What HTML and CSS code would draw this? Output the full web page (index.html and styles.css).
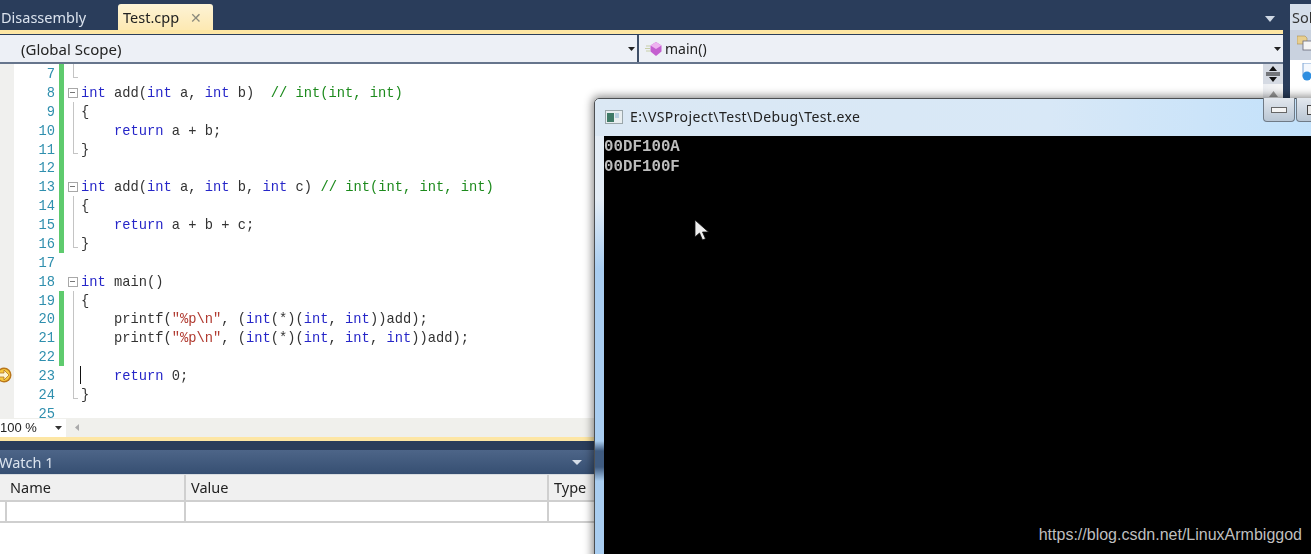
FILE: index.html
```html
<!DOCTYPE html>
<html lang="en">
<head>
<meta charset="UTF-8" />
<title>Test.cpp - Visual Studio</title>
<link rel="stylesheet" href="styles.css">
</head>

<body>
  <div class="screen">
    <div class="ide">
      <div class="main-col">
        <div class="tabbar">
          <span class="tab">Disassembly</span>
          <span class="tab active">Test.cpp <span class="tab-close">✕</span></span>
          <svg class="tab-menu" width="10" height="6" viewBox="0 0 10 6"><path d="M0 0h10L5 6z" fill="#cfd8e4"/></svg>
        </div>
        <div class="doc-line"></div>

        <div class="scopebar">
          <div class="combo scope-left">
            <span>(Global Scope)</span>
            <svg class="combo-arrow" width="7" height="4" viewBox="0 0 7 4"><path d="M0 0h7L3.500 4z" fill="#222"/></svg>
          </div>
          <div class="combo scope-right">
            <svg class="method-icon" width="18" height="16" viewBox="0 0 18 16">
              <path d="M1 5h4M0 7.500h5M1 10h4" stroke="#c8cfa8" stroke-width="1"/>
              <path d="M11 1l5.500 3.500v6L11 15l-5.500-4.500v-6z" fill="#c45fd0"/>
              <path d="M11 1l5.500 3.500L11 8 5.500 4.500z" fill="#eeb2f0"/>
            </svg>
            <span>main()</span>
            <svg class="combo-arrow" width="7" height="4" viewBox="0 0 7 4"><path d="M0 0h7L3.500 4z" fill="#222"/></svg>
          </div>
        </div>

        <div class="editor">
          <div class="code-area">
            <div class="row"><span class="bp"></span><span class="ln">7</span><span class="chg on"></span><span class="fold end"></span><span class="code"></span></div>
            <div class="row"><span class="bp"></span><span class="ln">8</span><span class="chg on"></span><span class="fold box"></span><span class="code"><i>int</i> add(<i>int</i> a, <i>int</i> b)  <b>// int(int, int)</b></span></div>
            <div class="row"><span class="bp"></span><span class="ln">9</span><span class="chg on"></span><span class="fold line"></span><span class="code">{</span></div>
            <div class="row"><span class="bp"></span><span class="ln">10</span><span class="chg on"></span><span class="fold line"></span><span class="code">    <i>return</i> a + b;</span></div>
            <div class="row"><span class="bp"></span><span class="ln">11</span><span class="chg on"></span><span class="fold end"></span><span class="code">}</span></div>
            <div class="row"><span class="bp"></span><span class="ln">12</span><span class="chg on"></span><span class="fold"></span><span class="code"></span></div>
            <div class="row"><span class="bp"></span><span class="ln">13</span><span class="chg on"></span><span class="fold box"></span><span class="code"><i>int</i> add(<i>int</i> a, <i>int</i> b, <i>int</i> c) <b>// int(int, int, int)</b></span></div>
            <div class="row"><span class="bp"></span><span class="ln">14</span><span class="chg on"></span><span class="fold line"></span><span class="code">{</span></div>
            <div class="row"><span class="bp"></span><span class="ln">15</span><span class="chg on"></span><span class="fold line"></span><span class="code">    <i>return</i> a + b + c;</span></div>
            <div class="row"><span class="bp"></span><span class="ln">16</span><span class="chg on"></span><span class="fold end"></span><span class="code">}</span></div>
            <div class="row"><span class="bp"></span><span class="ln">17</span><span class="chg"></span><span class="fold"></span><span class="code"></span></div>
            <div class="row"><span class="bp"></span><span class="ln">18</span><span class="chg"></span><span class="fold box"></span><span class="code"><i>int</i> main()</span></div>
            <div class="row"><span class="bp"></span><span class="ln">19</span><span class="chg on"></span><span class="fold line"></span><span class="code">{</span></div>
            <div class="row"><span class="bp"></span><span class="ln">20</span><span class="chg on"></span><span class="fold line"></span><span class="code">    printf(<u>"%p\n"</u>, (<i>int</i>(*)(<i>int</i>, <i>int</i>))add);</span></div>
            <div class="row"><span class="bp"></span><span class="ln">21</span><span class="chg on"></span><span class="fold line"></span><span class="code">    printf(<u>"%p\n"</u>, (<i>int</i>(*)(<i>int</i>, <i>int</i>, <i>int</i>))add);</span></div>
            <div class="row"><span class="bp"></span><span class="ln">22</span><span class="chg on"></span><span class="fold line"></span><span class="code"></span></div>
            <div class="row"><span class="bp">
              <svg class="bp-arrow" width="16" height="16" viewBox="0 0 16 16">
                <circle cx="8" cy="8" r="7.500" fill="#b9761a"/>
                <circle cx="8" cy="8" r="6" fill="#f7c93f"/>
                <path d="M3 6h5V3l5 5-5 5v-3H3z" fill="#fff6d0" stroke="#a8651a" stroke-width=".7"/>
              </svg>
            </span><span class="ln">23</span><span class="chg"></span><span class="fold line"></span><span class="code"><s class="caret"></s>    <i>return</i> 0;</span></div>
            <div class="row"><span class="bp"></span><span class="ln">24</span><span class="chg"></span><span class="fold end"></span><span class="code">}</span></div>
            <div class="row"><span class="bp"></span><span class="ln">25</span><span class="chg"></span><span class="fold"></span><span class="code"></span></div>
          </div>
          <div class="vscroll">
            <div class="split-btn">
              <svg width="14" height="16" viewBox="0 0 14 16">
                <path d="M0 7h14M0 9h14" stroke="#111" stroke-width="1"/>
                <path d="M7 0l4 5H3zM7 16l-4-5h8z" fill="#111"/>
              </svg>
            </div>
            <svg class="scroll-up" width="9" height="6" viewBox="0 0 9 6"><path d="M4.500 0L9 6H0z" fill="#999"/></svg>
          </div>
        </div>

        <div class="zoombar">
          <div class="zoom-combo">100 %
            <svg width="7" height="4" viewBox="0 0 7 4"><path d="M0 0h7L3.500 4z" fill="#333"/></svg>
          </div>
          <svg class="hscroll-left" width="4" height="7" viewBox="0 0 4 7"><path d="M4 0v7L0 3.500z" fill="#aaa"/></svg>
        </div>
        <div class="doc-line thin"></div>

        <div class="tool-gap"></div>
        <div class="watch-title">
          <span>Watch 1</span>
          <svg width="10" height="5" viewBox="0 0 10 5"><path d="M0 0h10L5 5z" fill="#d5dde8"/></svg>
        </div>
        <div class="watch-table">
          <div class="cell head"></div>
          <div class="cell head">Name</div>
          <div class="cell head">Value</div>
          <div class="cell head">Type</div>
          <div class="cell"></div>
          <div class="cell"></div>
          <div class="cell"></div>
          <div class="cell"></div>
        </div>
      </div>

      <div class="side-col">
        <div class="side-tab">Solution Explorer</div>
        <div class="side-tools">
          <svg width="18" height="18" viewBox="0 0 18 18">
            <path d="M0 2h8l2 2v6H0z" fill="#e8cf8e" stroke="#a78d55" stroke-width=".6"/>
            <rect x="6" y="7" width="12" height="9" fill="#f4f4f4" stroke="#667" stroke-width=".8"/>
          </svg>
        </div>
        <div class="side-body">
          <svg width="16" height="18" viewBox="0 0 16 18">
            <rect x="1" y="0" width="14" height="13" fill="#f4f8fd" stroke="#7fa6d6"/>
            <circle cx="5" cy="13" r="4.500" fill="#2f8ee0"/>
          </svg>
        </div>
      </div>
    </div>

    <div class="console">
      <div class="console-title">
        <svg width="18" height="14" viewBox="0 0 18 14">
          <rect x=".5" y=".5" width="17" height="13" fill="#e8eef0" stroke="#9aa6aa"/>
          <rect x="2" y="3" width="7" height="9" fill="#3f7a66"/>
          <rect x="10" y="3" width="4" height="5" fill="#b8cfe0"/>
        </svg>
        <span>E:\VSProject\Test\Debug\Test.exe</span>
        <div class="win-btns">
          <span class="win-btn"><s class="min-glyph"></s></span>
          <span class="win-btn"><s class="max-glyph"></s></span>
        </div>
      </div>
      <div class="console-body">
        <pre>00DF100A
00DF100F</pre>
        <svg class="mouse" width="16" height="23" viewBox="0 0 16 23">
          <path d="M1 1v17l4.500-4 3 7 3-1.300-3-6.700H14.500z" fill="#eee" stroke="#111" stroke-width=".8"/>
        </svg>
      </div>
    </div>
  </div>

  <div class="watermark">https://blog.csdn.net/LinuxArmbiggod</div>
</body>
</html>
```

FILE: styles.css
```css
html, body {
  margin: 0;
  padding: 0;
  overflow: hidden;
  background: #000;
}
.screen {
  position: relative;
  width: 1311px;
  height: 554px;
  overflow: hidden;
  filter: blur(0.45px);
}
.ide {
  display: flex;
  height: 554px;
  background: #2a3d5b;
  font-family: "Noto Sans", sans-serif;
  font-size: 14.5px;
  color: #222;
}
.main-col {
  width: 1283px;
  display: flex;
  flex-direction: column;
}

/* Tabs */
.tabbar {
  height: 30px;
  display: flex;
  align-items: flex-end;
  position: relative;
  flex: none;
}
.tab {
  width: 118px;
  height: 26px;
  line-height: 26px;
  padding-left: 1px;
  box-sizing: border-box;
  color: #dbe3ee;
  white-space: nowrap;
}
.tab.active {
  width: 95px;
  padding-left: 5px;
  color: #222;
  background: linear-gradient(#fdf3d6, #fde9b2);
  border-radius: 3px 3px 0 0;
}
.tab-close {
  margin-left: 7px;
  font-size: 14px;
  color: #8b8a7c;
}
.tab-menu {
  position: absolute;
  right: 8px;
  top: 16px;
}
.doc-line {
  height: 4px;
  flex: none;
  background: #fde6a4;
  margin-bottom: 1px;
}
.doc-line.thin {
  margin-bottom: 0;
}

/* Scope */
.scopebar {
  height: 29px;
  box-sizing: border-box;
  flex: none;
  display: flex;
  gap: 2px;
  background: #3f4f68;
  border-bottom: 2px solid #66758c;
}
.combo {
  display: flex;
  align-items: center;
  position: relative;
  background: #edf0f6;
  box-sizing: border-box;
}
.scope-left {
  width: 637px;
  padding-left: 21px;
  font-size: 15px;
}
.scope-right {
  flex: 1;
  padding-left: 6px;
  font-size: 14px;
}
.method-icon {
  margin-right: 2px;
}
.combo-arrow {
  position: absolute;
  right: 2px;
  top: 12px;
}

/* Editor */
.editor {
  height: 354px;
  flex: none;
  display: flex;
  background: #fff;
  overflow: hidden;
}
.code-area {
  flex: 1;
  font-family: "Liberation Mono", monospace;
  font-size: 13.75px;
  color: #333;
}
.row {
  display: flex;
  height: 18.88px;
  line-height: 22.88px;
}
.bp {
  width: 14px;
  flex: none;
  background: #f0f0ee;
  position: relative;
}
.bp-arrow {
  position: absolute;
  left: -4px;
  top: 1px;
}
.ln {
  width: 41px;
  flex: none;
  text-align: right;
  color: #2f8fae;
}
.chg {
  width: 5px;
  flex: none;
  margin-left: 4px;
}
.chg.on {
  background: #5fcb6e;
}
.fold {
  width: 17px;
  flex: none;
  position: relative;
}
.fold.line::before,
.fold.end::before,
.fold.box::after {
  content: "";
  position: absolute;
}
.fold.line::before {
  left: 9px;
  top: 0;
  bottom: 0;
  border-left: 1px solid #c4c4c4;
}
.fold.end::before {
  left: 9px;
  top: 0;
  height: 13px;
  width: 4px;
  border-left: 1px solid #c4c4c4;
  border-bottom: 1px solid #c4c4c4;
}
.fold.box {
  background: linear-gradient(#777, #777) 6px 9px / 5px 1px no-repeat;
}
.fold.box::after {
  left: 4px;
  top: 5px;
  width: 8px;
  height: 8px;
  border: 1px solid #a8a8a8;
}
.code {
  white-space: pre;
  position: relative;
}
.code i {
  font-style: normal;
  color: #2626c8;
}
.code b {
  font-weight: normal;
  color: #1c8a1c;
}
.code u {
  text-decoration: none;
  color: #b0392f;
}
.caret {
  position: absolute;
  left: -1px;
  top: 0;
  height: 18px;
  border-left: 1px solid #111;
}
.vscroll {
  width: 20px;
  flex: none;
  background: linear-gradient(90deg, #eceef2, #f6f6f6);
  display: flex;
  flex-direction: column;
  align-items: center;
}
.split-btn {
  width: 20px;
  height: 20px;
  background: #d5dae3;
  display: flex;
  align-items: center;
  justify-content: center;
}
.scroll-up {
  margin-top: 7px;
}

/* Zoom */
.zoombar {
  height: 19px;
  flex: none;
  display: flex;
  align-items: center;
  background: #f0f0ec;
}
.zoom-combo {
  width: 66px;
  height: 18px;
  background: #fff;
  box-sizing: border-box;
  font-family: "Liberation Sans", sans-serif;
  font-size: 13px;
  line-height: 18px;
  display: flex;
  justify-content: space-between;
  align-items: center;
  padding-right: 4px;
}
.hscroll-left {
  margin-left: 9px;
}

/* Watch */
.tool-gap {
  height: 9px;
  flex: none;
}
.watch-title {
  height: 24px;
  flex: none;
  display: flex;
  justify-content: space-between;
  align-items: center;
  width: 600px;
  background: linear-gradient(#4d6588, #364f72);
  color: #dbe3ee;
  margin-left: -1px;
  box-sizing: border-box;
  padding-right: 17px;
}
.watch-table {
  flex: 1;
  min-height: 0;
  display: grid;
  grid-template-columns: 5px 181px 363px 1fr;
  grid-template-rows: 27px 21px 1fr;
  background: #fff;
  border-top: 1px solid #d8dce0;
}
.cell {
  border-right: 2px solid #cfcfcf;
  border-bottom: 2px solid #cfcfcf;
  box-sizing: border-box;
  padding-left: 5px;
}
.cell.head {
  background: #f0f0f0;
  line-height: 24px;
}

/* Side panel */
.side-col {
  width: 21px;
  margin-left: 7px;
  display: flex;
  flex-direction: column;
  overflow: hidden;
}
.side-tab {
  height: 26px;
  margin-top: 4px;
  background: #d5deea;
  white-space: nowrap;
  padding-left: 2px;
  line-height: 26px;
  color: #333;
}
.side-tools {
  height: 30px;
  background: #c9d2df;
  padding: 4px 0 0 7px;
  box-sizing: border-box;
}
.side-body {
  flex: 1;
  background: #fff;
  padding: 3px 0 0 12px;
}

/* Console window */
.console {
  position: absolute;
  left: 594px;
  top: 98px;
  width: 760px;
  height: 520px;
  display: flex;
  flex-direction: column;
  border: 1px solid #4c4f52;
  border-radius: 5px 0 0 0;
  box-shadow: 0 0 9px 2px rgba(0, 0, 0, 0.45);
  box-sizing: border-box;
  padding: 0 0 0 9px;
  background: linear-gradient(#e4edf6 0, #e4edf6 100px, #a9cdf0 170px, #a9cdf0 342px, #3f5b80 352px, #3f5b80 368px, #a9cdf0 382px);
}
.console-title {
  height: 37px;
  flex: none;
  margin-left: -9px;
  padding-left: 10px;
  padding-bottom: 2px;
  box-sizing: border-box;
  display: flex;
  align-items: center;
  gap: 7px;
  position: relative;
  font-family: "Noto Sans", sans-serif;
  font-size: 14px;
  letter-spacing: 0.4px;
  color: #222;
  background: linear-gradient(90deg, #dbe8f4, #d8e8f7 60%, #bfe0fb);
  border-radius: 5px 0 0 0;
}
.win-btns {
  position: absolute;
  left: 668px;
  top: -1px;
  display: flex;
  gap: 1px;
}
.win-btn {
  width: 32px;
  height: 24px;
  background: linear-gradient(#e3e8ee, #b9c6d4);
  border: 1px solid #6f7a86;
  border-top: 0;
  border-radius: 0 0 4px 4px;
  box-sizing: border-box;
  display: flex;
  align-items: center;
  justify-content: center;
}
.min-glyph {
  width: 14px;
  height: 4px;
  background: #f4f4f4;
  border: 1px solid #666;
}
.max-glyph {
  width: 9px;
  height: 8px;
  background: #e8e8e8;
  border: 1px solid #444;
}
.console-body {
  flex: 1;
  background: #000;
  position: relative;
}
.console-body pre {
  margin: 0;
  padding-top: 1px;
  font-family: "Liberation Mono", monospace;
  font-weight: bold;
  font-size: 15.8px;
  line-height: 20px;
  color: #bdbdbd;
}
.mouse {
  position: absolute;
  left: 90px;
  top: 83px;
}

.watermark {
  position: absolute;
  right: 9px;
  top: 526px;
  font-family: "Liberation Sans", sans-serif;
  font-size: 16px;
  color: #bfbfbf;
}
```
